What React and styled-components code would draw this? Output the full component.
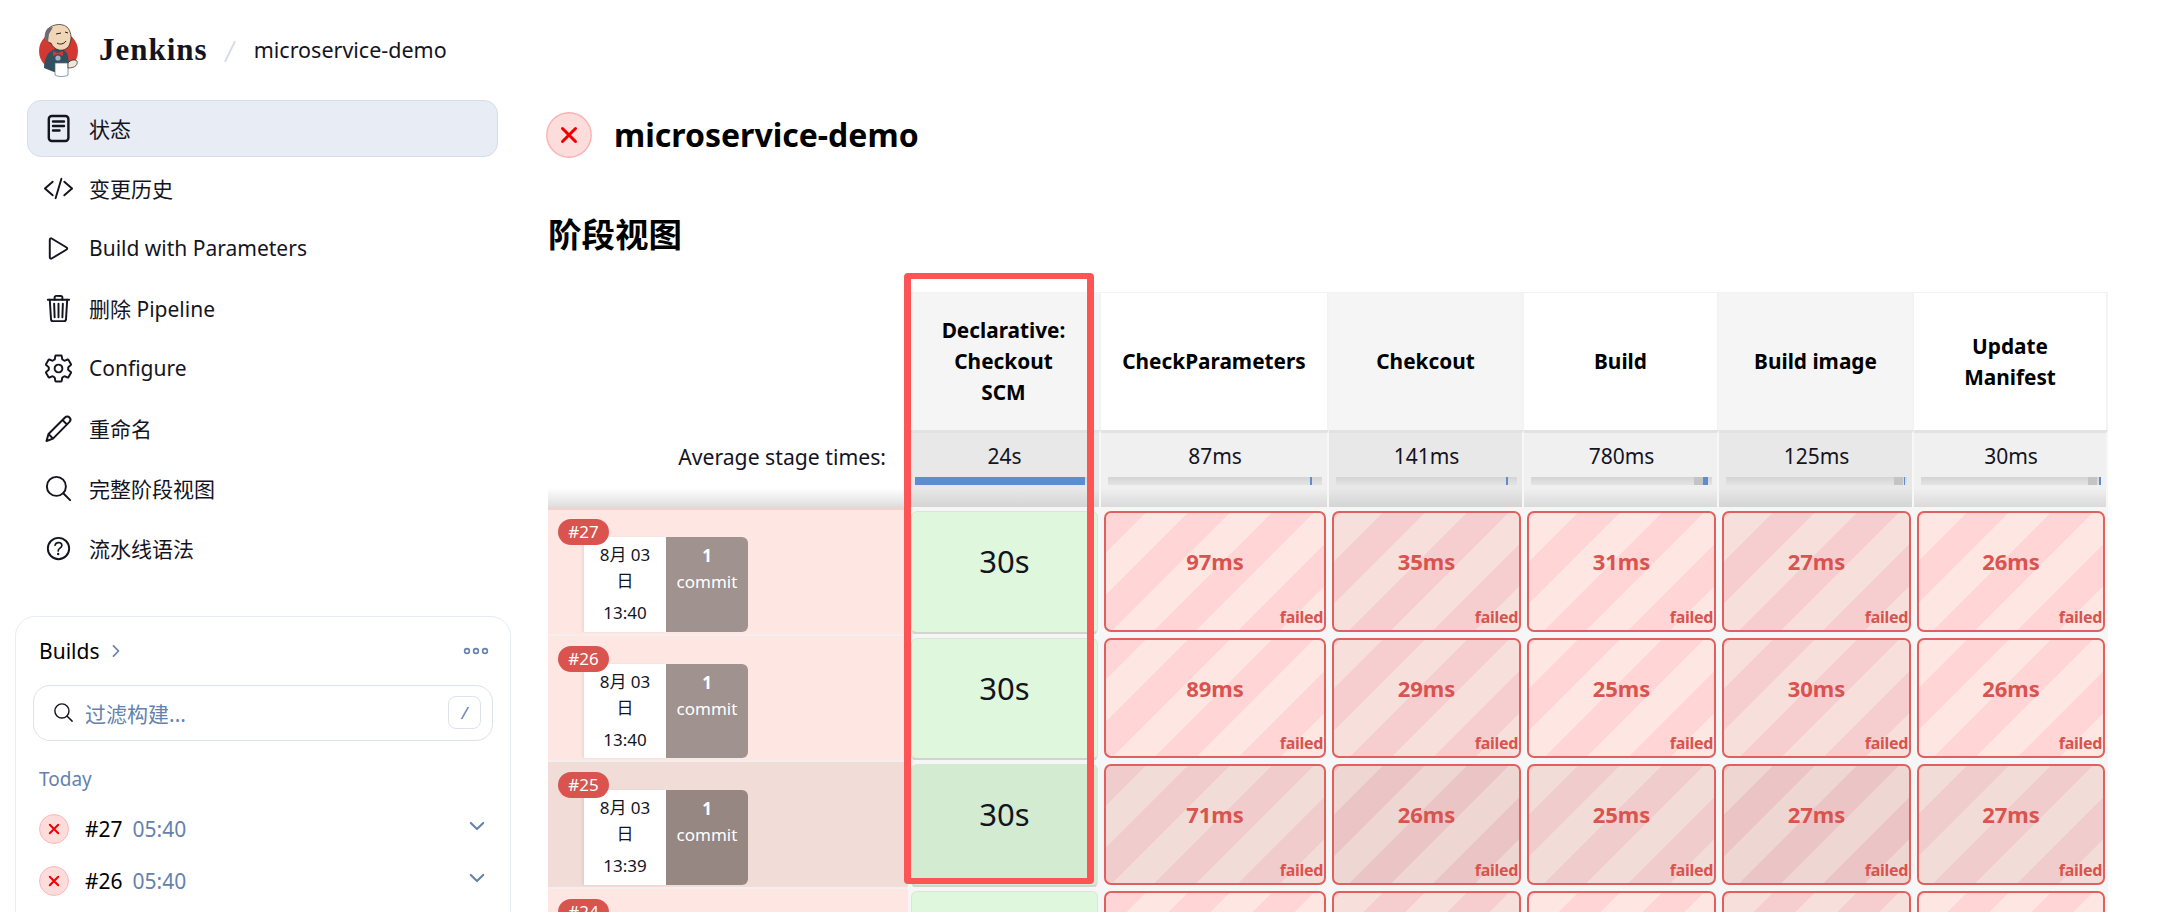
// IMPORTS
import styled, { createGlobalStyle } from 'styled-components'
import {
  IoCodeSlashOutline, IoPlayOutline, IoTrashOutline, IoSettingsOutline,
  IoSearchOutline, IoHelpCircleOutline, IoChevronForward, IoChevronDown,
} from 'react-icons/io5'

// STYLES
const font = '"Noto Sans", "Noto Sans CJK SC", sans-serif'
const blueGrey = '#6482ad'
const columns = '360px 193px 228px 195px 195px 195px 194px'

const GlobalStyle = createGlobalStyle`
  html, body { margin: 0; height: 100%; overflow: hidden; background: #fff; }
  body { font-family: ${font}; font-size: 21px; color: #14141f; }
  * { box-sizing: border-box; }
`

const Page = styled.div`
  display: flex;
  width: 2157px;
  height: 912px;
  overflow: hidden;
`
const Side = styled.aside`
  flex: none;
  width: 548px;
  padding: 0 37px 0 15px;
`
const Brand = styled.div`
  display: flex;
  align-items: center;
  height: 100px;
  padding-left: 23px;
`
const BrandName = styled.span`
  font-family: "Liberation Serif", serif;
  font-weight: 700;
  font-size: 31px;
  margin-left: 17px;
  letter-spacing: 1px;
`
const Slash = styled.span`
  width: 2px;
  height: 23px;
  margin: 3px 23px 0 21px;
  background: #d5dce9;
  transform: rotate(26deg);
`
const Crumb = styled.span`
  font-size: 21.5px;
  margin-bottom: 2px;
`
const Menu = styled.nav`
  display: flex;
  flex-direction: column;
  gap: 3px;
  margin: 0 13px 0 12px;
`
const MenuItem = styled.div`
  display: flex;
  align-items: center;
  height: 57px;
  padding-left: 15px;
  gap: 15px;
  font-size: 21px;
  border-radius: 14px;
  border: 1px solid ${p => (p.$active ? '#d5dcea' : 'transparent')};
  background: ${p => (p.$active ? '#e8ecf4' : 'transparent')};
  svg { flex: none; width: 31px; height: 31px; }
  span { margin-bottom: 2px; }
`
const BuildsCard = styled.section`
  height: 340px;
  margin-top: 39px;
  padding: 19px 17px;
  border: 1.5px solid #e8ecf4;
  border-radius: 20px;
`
const BuildsHead = styled.div`
  display: flex;
  align-items: center;
  height: 30px;
  padding: 0 4px 0 6px;
  font-size: 21px;
  color: #000;
  svg { margin-left: 8px; color: ${blueGrey}; }
`
const Dots = styled.svg`
  margin-left: auto !important;
`
const SearchBox = styled.div`
  display: flex;
  align-items: center;
  height: 56px;
  margin-top: 18.5px;
  padding: 0 11px 0 18px;
  border: 1.5px solid #dde2ec;
  border-radius: 17px;
  font-size: 21px;
  color: ${blueGrey};
  svg { color: #14141f; margin-right: 10px; }
`
const Kbd = styled.span`
  display: flex;
  align-items: center;
  justify-content: center;
  width: 33px;
  height: 33px;
  margin-left: auto;
  border: 1.5px solid #dde2ec;
  border-radius: 8px;
  font-size: 17px;
  font-style: italic;
`
const GroupLabel = styled.div`
  margin: 24px 0 10px 6px;
  font-size: 19px;
  line-height: 28px;
  color: ${blueGrey};
`
const BuildRow = styled.div`
  display: flex;
  align-items: center;
  height: 52px;
  padding: 0 6px;
  font-size: 21px;
`
const BuildNo = styled.span`
  margin-left: 16px;
  color: #000;
`
const BuildTime = styled.span`
  margin-left: 10px;
  color: ${blueGrey};
`
const RowChevron = styled(IoChevronDown)`
  margin: -6px -1px 0 auto;
  color: ${blueGrey};
`
const Main = styled.main`
  flex: none;
  width: 1561px;
  padding-top: 112px;
`
const TitleRow = styled.div`
  display: flex;
  align-items: center;
  gap: 22px;
  height: 46px;
  margin-left: -2px;
`
const Title = styled.h1`
  margin: 0 0 2px;
  font-size: 32px;
  font-weight: 700;
  color: #000;
`
const SectionTitle = styled.h2`
  margin: 54px 0 36px;
  font-size: 33.5px;
  line-height: 44px;
  font-weight: 700;
  color: #000;
`
const Table = styled.div`
  position: relative;
  width: 1560px;
`
const Highlight = styled.div`
  position: absolute;
  left: 356px;
  top: -19px;
  width: 190px;
  height: 611px;
  z-index: 3;
  border: solid #fd5555;
  border-width: 6px 7px;
  border-radius: 4px;
`
const Row = styled.div`
  display: grid;
  grid-template-columns: ${columns};
`
const HeadCell = styled.div`
  display: flex;
  align-items: center;
  justify-content: center;
  height: 138px;
  padding: 0 10px;
  text-align: center;
  font-size: 20.8px;
  line-height: 31px;
  font-weight: 700;
  color: #000;
  background: ${p => (p.$dim ? '#f5f5f5' : '#fff')};
  border-top: 1px solid #f3f3f3;
  border-right: 2px solid #f3f3f3;
`
const HeadBlank = styled.div``
const AvgLabel = styled.div`
  height: 77px;
  padding: 12px 22px 0 0;
  text-align: right;
  font-size: 21.2px;
  line-height: 30px;
  background: linear-gradient(#fff 75%, #dedede);
`
const AvgCell = styled.div`
  height: 77px;
  padding: 8px 5px 0 7px;
  text-align: center;
  font-size: 21px;
  line-height: 30px;
  border-top: 3px solid #e2e2e2;
  border-right: 2px solid #f7f7f7;
  background: linear-gradient(${p => (p.$dim ? '#e8e8e8 75%, #d4d4d4' : '#f0f0f0 75%, #dadada')});
`
const Track = styled.div`
  position: relative;
  height: 8px;
  margin-top: 6px;
  background: linear-gradient(#d4d4d4, #e4e4e4);
`
const TrackPart = styled.div`
  position: absolute;
  top: 0;
  bottom: 0;
  background: ${p => (p.$blue ? '#5f8bd0' : '#c4c4c4')};
`
const BodyRow = styled(Row)`
  height: 126.67px;
  background: ${p => (p.$dim ? '#f7f7f7' : '#fafafa')};
`
const BuildCell = styled.div`
  position: relative;
  display: flex;
  padding: ${p => (p.$first ? '27px' : '28px')} 0 2px 36px;
  background: ${p => (p.$dark ? '#f1dcd7' : '#fee7e2')};
  border-top: ${p => (p.$first ? '3px solid #eed3ce' : '2px solid #f4efee')};
`
const Badge = styled.span`
  position: absolute;
  left: 10px;
  top: ${p => (p.$first ? '9px' : '10px')};
  z-index: 1;
  width: 51px;
  height: 26px;
  border-radius: 13px;
  background: #d9534f;
  color: #fff;
  font-size: 17px;
  line-height: 26px;
  text-align: center;
`
const DateBox = styled.div`
  width: 82px;
  padding-top: 5px;
  background: #fff;
  text-align: center;
  font-size: 17px;
  line-height: 26px;
  box-shadow: -2px 0 2px rgba(0, 0, 0, 0.06);
`
const DateTime = styled.div`
  margin-top: 6px;
`
const CommitBox = styled.div`
  width: 82px;
  padding-top: 6px;
  border-radius: 0 6px 6px 0;
  background: ${p => (p.$dark ? '#968783' : '#a0928e')};
  color: #fff;
  text-align: center;
  font-size: 17px;
  line-height: 26px;
  b { display: block; }
`
const StageSlot = styled.div`
  padding: 4px 3px 2px;
  background: #f6f6f6;
`
const PassCell = styled.div`
  height: calc(100% + 3px);
  padding-top: 29px;
  text-align: center;
  font-size: 31px;
  line-height: 40px;
  color: #14141f;
  background: ${p => (p.$dark ? '#d3ebd0' : '#dff7dc')};
  border: 1px solid #d8e8d4;
  border-bottom: 3px solid #d0d6ce;
  border-radius: 6px;
`
const FailCell = styled.div`
  position: relative;
  height: 100%;
  padding-top: 28px;
  text-align: center;
  font-size: 22px;
  line-height: 40px;
  font-weight: 700;
  color: #d9534f;
  border: 2px solid #e0605e;
  border-radius: 7px;
  background-color: ${p => p.$bg};
  background-image: linear-gradient(135deg,
    ${p => p.$stripe} 25%, transparent 25%, transparent 50%,
    ${p => p.$stripe} 50%, ${p => p.$stripe} 75%, transparent 75%);
  background-size: 84px 84px;
  background-position: right -32px top 0;
`
const FailTag = styled.span`
  position: absolute;
  right: 1px;
  bottom: 2px;
  font-size: 16px;
  line-height: 22px;
  letter-spacing: -0.3px;
`

// DATA
const stages = [
  { name: <>Declarative:<br />Checkout<br />SCM</>, avg: '24s', grey: null, blue: [0, 95] },
  { name: 'CheckParameters', avg: '87ms', grey: null, blue: [94.2, 1] },
  { name: 'Chekcout', avg: '141ms', grey: null, blue: [94, 1.2] },
  { name: 'Build', avg: '780ms', grey: [90, 5], blue: [95, 2.8] },
  { name: 'Build image', avg: '125ms', grey: [93, 5], blue: [98.2, 0.8] },
  { name: <>Update<br />Manifest</>, avg: '30ms', grey: [93, 5], blue: [98.8, 1.2] },
]

// the last row only shows its top edge in the window
const builds = [
  { no: 27, time: '13:40', cells: ['30s', '97ms', '35ms', '31ms', '27ms', '26ms'] },
  { no: 26, time: '13:40', cells: ['30s', '89ms', '29ms', '25ms', '30ms', '26ms'] },
  { no: 25, time: '13:39', dark: true, cells: ['30s', '71ms', '26ms', '25ms', '27ms', '27ms'] },
  { no: 24, partial: true, cells: ['', '', '', '', '', ''] },
]

// ICONS
const StatusIcon = () => (
  <svg viewBox="0 0 31 31" fill="none" stroke="currentColor" strokeWidth="2.4" strokeLinecap="round">
    <rect x="5.8" y="3" width="19.6" height="25" rx="3" />
    <path d="M10 8.5h11M10 13h11M10 17.5h6.5" />
  </svg>
)

const PencilIcon = () => (
  <svg viewBox="0 0 31 31" fill="none" stroke="currentColor" strokeWidth="2" strokeLinejoin="round">
    <path d="M3.5 28l2-7L22 4.5c1.4-1.4 3.3-1.3 4.5 0 1.2 1.2 1.3 3 0 4.4L10 25.6z" />
    <path d="M5.5 21l4.5 4.6M19.5 7l4.6 4.6" />
  </svg>
)

const CrossBadge = ({ size }) => (
  <svg width={size} height={size} viewBox="0 0 46 46">
    <circle cx="23" cy="23" r="22.2" fill="#fddcdc" stroke="#fdb1b1" strokeWidth="1.4" />
    <path d="M16.5 16.5l13 13M29.5 16.5l-13 13" stroke="#f00000" strokeWidth="3" strokeLinecap="round" />
  </svg>
)

const JenkinsLogo = () => (
  <svg width="44" height="56" viewBox="0 0 44 56">
    <circle cx="20.5" cy="29" r="19.5" fill="#d33833" />
    <path d="M6 46c0-9 4-18 12-19 6-1 11 2 12 7l1 8-3 7-12 1z" fill="#335061" />
    <path d="M9 9c2-6 14-9 20-4 4 4 5 11 3 16-1 5-6 8-11 7-4-1-7-4-8-7-3 0-5-3-4-6 0-2 0-4 0-6z" fill="#f0d6b7" stroke="#231f20" strokeWidth="0.7" />
    <path d="M10 6C7 9 6 14 7 18l3 2 1-8 4-7z" fill="#6d6b6d" />
    <path d="M18 12l5-1M27 10l3 1M19 21c3 2 7 1 9-2" fill="none" stroke="#231f20" strokeWidth="1" />
    <path d="M15 29l5 2 5-2v5l-5-2-5 2z" fill="#d33833" />
    <circle cx="20" cy="36" r="2.6" fill="#9fb2c0" />
    <path d="M17 41h13v12c-3 2-10 2-13 0z" fill="#fff" stroke="#49728b" strokeWidth="0.7" />
    <path d="M30 41c2-3 7-4 9-2 1 3-1 7-9 7z" fill="#f4e6d6" stroke="#231f20" strokeWidth="0.7" />
  </svg>
)

const menu = [
  { label: '状态', icon: <StatusIcon />, active: true },
  { label: '变更历史', icon: <IoCodeSlashOutline /> },
  { label: 'Build with Parameters', icon: <IoPlayOutline /> },
  { label: '删除 Pipeline', icon: <IoTrashOutline /> },
  { label: 'Configure', icon: <IoSettingsOutline /> },
  { label: '重命名', icon: <PencilIcon /> },
  { label: '完整阶段视图', icon: <IoSearchOutline /> },
  { label: '流水线语法', icon: <IoHelpCircleOutline /> },
]

// MAIN COMPONENT
export default function App() {
  return (
    <Page>
      <GlobalStyle />
      <Side>
        <Brand>
          <JenkinsLogo />
          <BrandName>Jenkins</BrandName>
          <Slash />
          <Crumb>microservice-demo</Crumb>
        </Brand>
        <Menu>
          {menu.map(item => (
            <MenuItem key={item.label} $active={item.active}>
              {item.icon}
              <span>{item.label}</span>
            </MenuItem>
          ))}
        </Menu>
        <BuildsCard>
          <BuildsHead>
            Builds
            <IoChevronForward size={18} />
            <Dots width="26" height="8" viewBox="0 0 26 8" fill="none" stroke={blueGrey} strokeWidth="1.6">
              <circle cx="4" cy="4" r="2.4" />
              <circle cx="13" cy="4" r="2.4" />
              <circle cx="22" cy="4" r="2.4" />
            </Dots>
          </BuildsHead>
          <SearchBox>
            <IoSearchOutline size={23} />
            过滤构建...
            <Kbd>/</Kbd>
          </SearchBox>
          <GroupLabel>Today</GroupLabel>
          <BuildRow>
            <CrossBadge size={30} />
            <BuildNo>#27</BuildNo>
            <BuildTime>05:40</BuildTime>
            <RowChevron size={22} />
          </BuildRow>
          <BuildRow>
            <CrossBadge size={30} />
            <BuildNo>#26</BuildNo>
            <BuildTime>05:40</BuildTime>
            <RowChevron size={22} />
          </BuildRow>
        </BuildsCard>
      </Side>
      <Main>
        <TitleRow>
          <CrossBadge size={46} />
          <Title>microservice-demo</Title>
        </TitleRow>
        <SectionTitle>阶段视图</SectionTitle>
        <Table>
          <Highlight />
          <Row>
            <HeadBlank />
            {stages.map((s, i) => (
              <HeadCell key={i} $dim={i % 2 === 0}>{s.name}</HeadCell>
            ))}
          </Row>
          <Row>
            <AvgLabel>Average stage times:</AvgLabel>
            {stages.map((s, i) => (
              <AvgCell key={i} $dim={i % 2 === 0}>
                {s.avg}
                <Track>
                  {s.grey && <TrackPart style={{ left: `${s.grey[0]}%`, width: `${s.grey[1]}%` }} />}
                  <TrackPart $blue style={{ left: `${s.blue[0]}%`, width: `${s.blue[1]}%` }} />
                </Track>
              </AvgCell>
            ))}
          </Row>
          {builds.map((b, r) => (
            <BodyRow key={b.no}>
              <BuildCell $dark={b.dark} $first={r === 0}>
                <Badge $first={r === 0}>#{b.no}</Badge>
                {!b.partial && (
                  <>
                    <DateBox>
                      8月 03<br />日
                      <DateTime>{b.time}</DateTime>
                    </DateBox>
                    <CommitBox $dark={b.dark}>
                      <b>1</b>
                      commit
                    </CommitBox>
                  </>
                )}
              </BuildCell>
              {b.cells.map((c, i) => {
                const dim = i % 2 === 0
                const bg = b.dark ? (dim ? '#eed7d3' : '#f1dcd7') : dim ? '#f7e0dc' : '#fee7e2'
                const stripe = b.dark ? (dim ? '#ebc4c5' : '#f1cccc') : dim ? '#f6cecf' : '#ffd5d6'
                return (
                  <StageSlot key={i}>
                    {i === 0 ? (
                      <PassCell $dark={b.dark}>{c}</PassCell>
                    ) : (
                      <FailCell $bg={bg} $stripe={stripe}>
                        {c}
                        {!b.partial && <FailTag>failed</FailTag>}
                      </FailCell>
                    )}
                  </StageSlot>
                )
              })}
            </BodyRow>
          ))}
        </Table>
      </Main>
    </Page>
  )
}
